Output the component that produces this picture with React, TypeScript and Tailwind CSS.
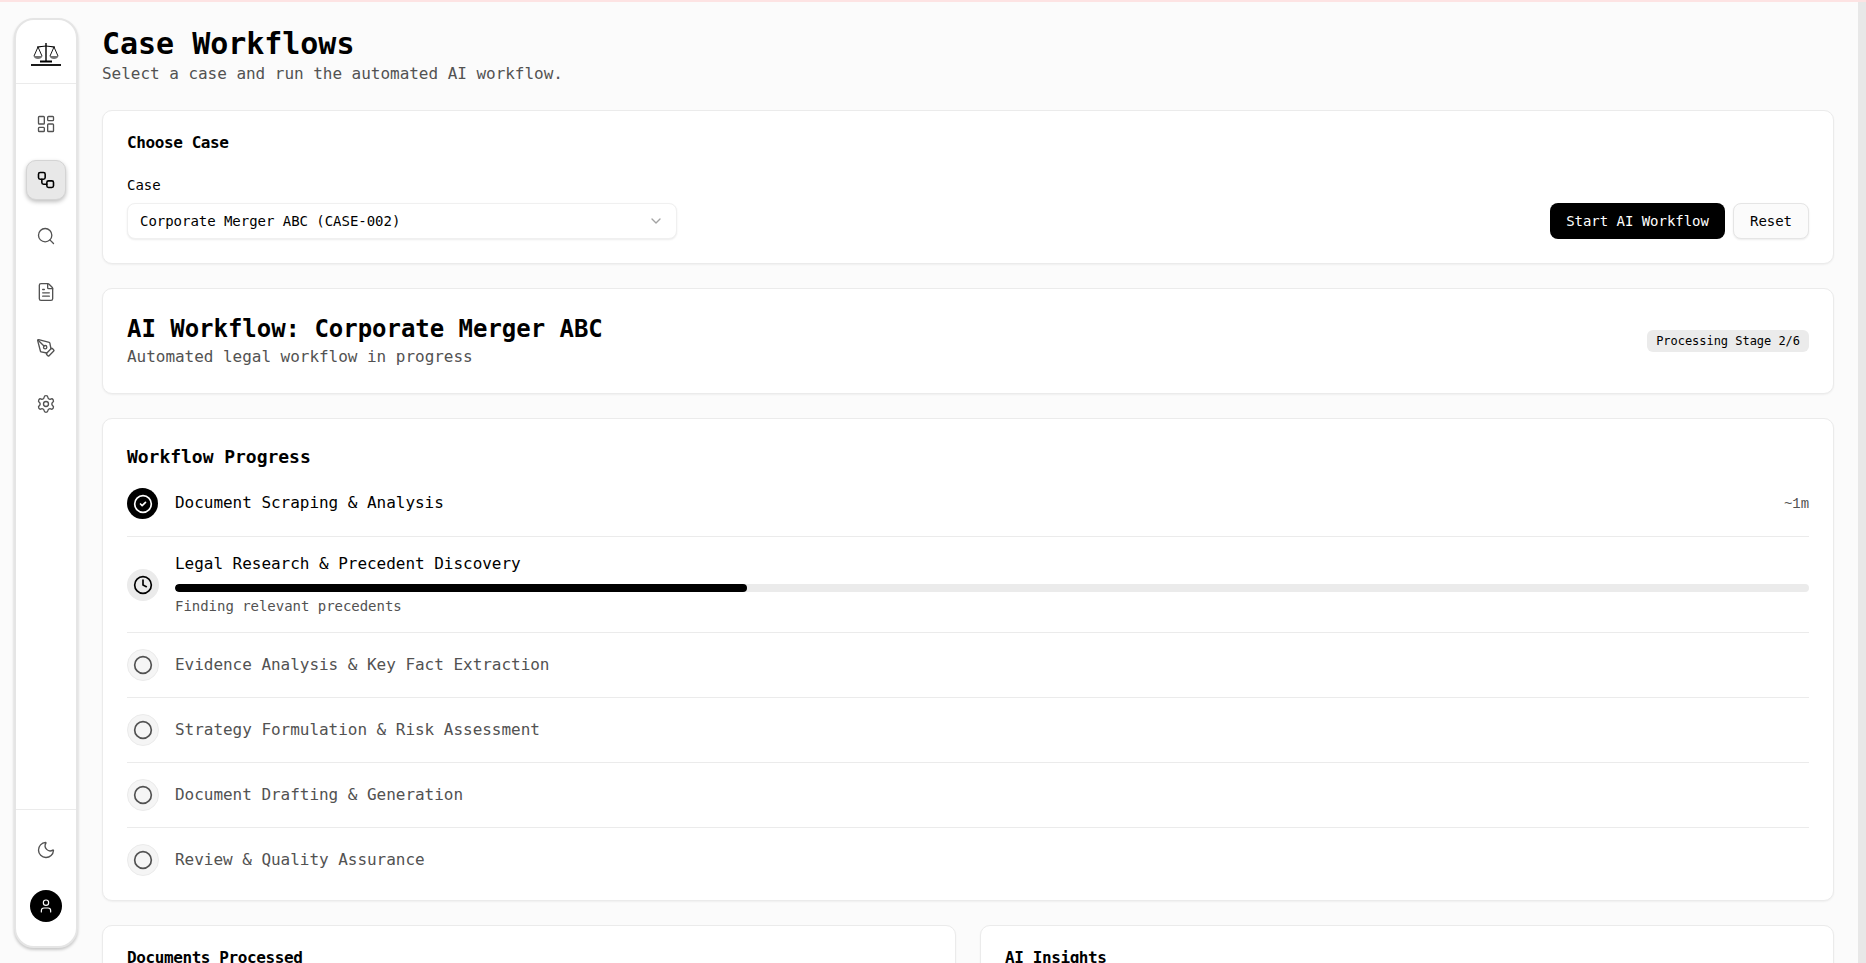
import {
  Circle,
  CircleCheck,
  ChevronDown,
  Clock,
  FileText,
  LayoutDashboard,
  Moon,
  PenTool,
  Search,
  Settings,
  User,
  Workflow,
} from "lucide-react";

const pendingSteps = [
  "Evidence Analysis & Key Fact Extraction",
  "Strategy Formulation & Risk Assessment",
  "Document Drafting & Generation",
  "Review & Quality Assurance",
];

function ScalesLogo() {
  return (
    <svg width="30" height="23" viewBox="0 0 30 23" fill="none" stroke="#000" strokeWidth="0.9">
      <path d="M15 0v18" strokeWidth="1.4" />
      <path d="M6 4c3 0 6-1 9-1s6 1 9 1" strokeWidth="1.2" />
      <path d="M7 4l-4 9M7 4l4 9M23 4l-4 9M23 4l4 9" />
      <path d="M2.500 13h9c-.6 2-2.200 3-4.500 3s-3.900-1-4.500-3zM18.500 13h9c-.6 2-2.200 3-4.500 3s-3.900-1-4.500-3z" stroke="none" fill="#000" fillOpacity="0.55" />
      <path d="M9 18.500h12" strokeWidth="2" />
      <path d="M0 22h30" strokeWidth="1.800" />
    </svg>
  );
}

function NavButton({children, active = false}: { children: React.ReactNode; active?: boolean }) {
  return (
    <div
      className={
        active
          ? "w-10 h-10 flex items-center justify-center rounded-[10px] bg-[#e8e8e8] border border-[#d4d4d4] shadow-[0_2px_4px_rgba(0,0,0,0.25)] text-black"
          : "w-10 h-10 flex items-center justify-center rounded-[10px] text-[#525252]"
      }
    >
      {children}
    </div>
  );
}

function Sidebar() {
  return (
    <aside className="ml-[14px] mt-4 mb-[15px] w-16 shrink-0 flex flex-col bg-white border-2 border-[#e5e5e5] rounded-[20px] shadow-[0_2px_3px_rgba(0,0,0,0.2)]">
      <div className="h-[64px] shrink-0 flex items-center justify-center border-b border-[#ebebeb] pt-[5px]">
        <ScalesLogo />
      </div>
      <nav className="flex-1 flex flex-col items-center gap-4 pt-5">
        <NavButton><LayoutDashboard size={20} strokeWidth={1.6} /></NavButton>
        <NavButton active><Workflow size={20} strokeWidth={1.9} /></NavButton>
        <NavButton><Search size={20} strokeWidth={1.6} /></NavButton>
        <NavButton><FileText size={20} strokeWidth={1.6} /></NavButton>
        <NavButton><PenTool size={20} strokeWidth={1.6} /></NavButton>
        <NavButton><Settings size={20} strokeWidth={1.6} /></NavButton>
      </nav>
      <div className="flex flex-col items-center gap-5 pt-5 pb-6 border-t border-[#ebebeb]">
        <NavButton><Moon size={20} strokeWidth={1.6} /></NavButton>
        <div className="w-8 h-8 rounded-full bg-black text-white flex items-center justify-center">
          <User size={16} strokeWidth={1.75} />
        </div>
      </div>
    </aside>
  );
}

function Card({children, className = ""}: { children: React.ReactNode; className?: string }) {
  return (
    <section className={`bg-white border border-[#ebebeb] rounded-[10px] p-6 shadow-[0_1px_2px_rgba(0,0,0,0.05)] ${className}`}>
      {children}
    </section>
  );
}

export default function App() {
  return (
    <div className="h-screen overflow-hidden flex flex-col bg-[#fbfbfb] text-black tracking-[-0.002em] [font-family:'DejaVu_Sans_Mono',monospace]">
      <div className="h-0.5 shrink-0 bg-[#fde3e3]" />
      <div className="flex-1 min-h-0 flex">
        <Sidebar />
        <main className="flex-1 min-w-0 ml-6 mr-6 pt-6 flex flex-col gap-6">
          <header>
            <h1 className="text-3xl font-bold">Case Workflows</h1>
            <p className="text-base text-[#525252]">Select a case and run the automated AI workflow.</p>
          </header>

          <Card>
            <h2 className="text-base leading-none font-bold tracking-tight mb-6">Choose Case</h2>
            <div className="flex items-end justify-between">
              <div>
                <label className="block text-sm font-medium mb-2">Case</label>
                <div className="w-[550px] h-9 flex items-center justify-between px-3 bg-white border border-[#f0f0f0] rounded-lg shadow-[0_1px_2px_rgba(0,0,0,0.08)] text-sm">
                  <span>Corporate Merger ABC (CASE-002)</span>
                  <ChevronDown size={16} className="text-[#a3a3a3]" />
                </div>
              </div>
              <div className="flex gap-2">
                <button className="w-[175px] h-9 rounded-lg bg-black text-white text-sm font-medium">Start AI Workflow</button>
                <button className="w-[76px] h-9 rounded-lg bg-[#fbfbfb] border border-[#e5e5e5] shadow-[0_1px_2px_rgba(0,0,0,0.08)] text-sm font-medium">Reset</button>
              </div>
            </div>
          </Card>

          <Card className="flex items-center justify-between">
            <div>
              <h2 className="text-2xl font-bold">AI Workflow: Corporate Merger ABC</h2>
              <p className="text-base text-[#525252]">Automated legal workflow in progress</p>
            </div>
            <span className="px-[9px] h-[22px] flex items-center rounded-md bg-[#ebebeb] text-xs font-medium">Processing Stage 2/6</span>
          </Card>

          <Card>
            <h2 className="text-lg font-bold mb-[17px]">Workflow Progress</h2>
            <div className="flex items-center gap-4 pb-4 border-b border-[#ebebeb]">
              <div className="w-8 h-8 shrink-0 flex items-start">
                <div className="w-[31px] h-[31px] rounded-full bg-black text-white flex items-center justify-center">
                  <CircleCheck size={20} strokeWidth={2} />
                </div>
              </div>
              <span className="flex-1 text-base font-medium mb-[2px]">Document Scraping &amp; Analysis</span>
              <span className="text-sm text-[#525252] [font-family:'Liberation_Mono',monospace]">~1m</span>
            </div>
            <div className="flex items-center gap-4 py-4 border-b border-[#ebebeb]">
              <div className="w-8 h-8 shrink-0 rounded-full bg-[#ebebeb] text-black flex items-center justify-center">
                <Clock size={20} strokeWidth={2} />
              </div>
              <div className="flex-1">
                <div className="-mt-px text-base font-medium">Legal Research &amp; Precedent Discovery</div>
                <div className="mt-2 h-2 rounded-full bg-[#ebebeb] overflow-hidden">
                  <div className="h-full w-[35%] bg-black rounded-full" />
                </div>
                <div className="mt-1 text-sm text-[#525252]">Finding relevant precedents</div>
              </div>
            </div>
            {pendingSteps.map((step, i) => (
              <div
                key={step}
                className={
                  i === pendingSteps.length - 1
                    ? "flex items-center gap-4 pt-4"
                    : "flex items-center gap-4 py-4 border-b border-[#ebebeb]"
                }
              >
                <div className="w-8 h-8 shrink-0 rounded-full bg-[#f5f5f5] border border-[#ebebeb] text-[#525252] flex items-center justify-center">
                  <Circle size={20} strokeWidth={2} />
                </div>
                <span className="text-base font-medium text-[#525252]">{step}</span>
              </div>
            ))}
          </Card>

          <div className="grid grid-cols-2 gap-6">
            <Card>
              <h2 className="text-base leading-none font-bold tracking-tight">Documents Processed</h2>
            </Card>
            <Card>
              <h2 className="text-base leading-none font-bold tracking-tight">AI Insights</h2>
            </Card>
          </div>
        </main>
        <div className="w-2 shrink-0 bg-[#e8e8e8]" />
      </div>
    </div>
  );
}
